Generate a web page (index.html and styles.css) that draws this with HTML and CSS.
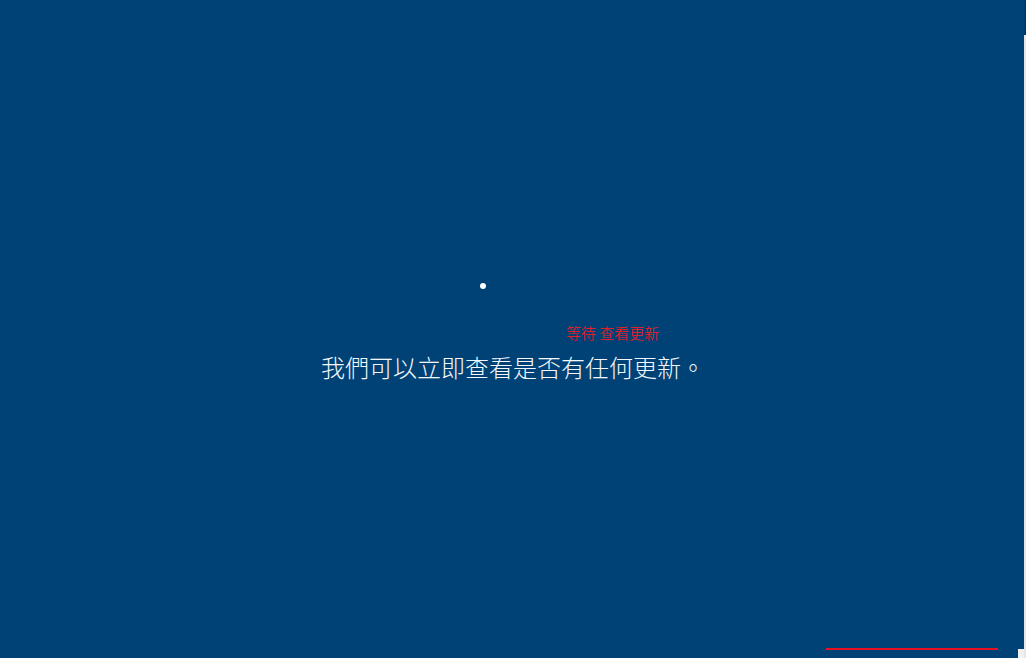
FILE: index.html
```html
<!DOCTYPE html>
<html lang="zh-Hant">
<head>
<meta charset="utf-8">
<title>更新</title>
<link rel="stylesheet" href="styles.css">
</head>
<body>
<div class="page">
  <main class="stage">
    <div class="spinner"><span class="dot"></span></div>
    <div class="message">
      <div class="status">等待 查看更新</div>
      <div class="title">我們可以立即查看是否有任何更新。</div>
    </div>
    <div class="footer"><span class="progress"></span></div>
  </main>
  <div class="edge"><span class="edge-top"></span><span class="edge-bar"></span></div>
  <span class="corner"></span>
</div>
</body>
</html>
```
FILE: styles.css
```css
html, body {
  margin: 0;
  padding: 0;
  height: 100%;
  background: #004275;
  overflow: hidden;
}
.page {
  position: relative;
  display: flex;
  width: 1026px;
  height: 658px;
  font-family: "Noto Sans CJK TC", "Noto Sans", sans-serif;
}
.stage {
  flex: 1;
  display: flex;
  flex-direction: column;
  align-items: center;
  padding-top: 283px;
  background: #004275;
}
.spinner {
  width: 6px;
  height: 6px;
  margin-left: -59px;
}
.dot {
  display: block;
  width: 6px;
  height: 6px;
  border-radius: 50%;
  background: #ffffff;
}
.message {
  width: 384px;
  margin-top: 35px;
  margin-left: 2px;
  display: flex;
  flex-direction: column;
}
.status {
  padding-left: 245px;
  font-size: 15px;
  font-weight: 300;
  line-height: 18px;
  color: #ff1a1a;
  white-space: nowrap;
}
.title {
  margin-top: 11px;
  font-size: 24px;
  font-weight: 300;
  line-height: 28px;
  color: #f4f8fc;
  white-space: nowrap;
}
.footer {
  margin-top: auto;
  align-self: stretch;
  display: flex;
  padding-left: 826px;
  padding-bottom: 8px;
}
.progress {
  display: block;
  width: 172px;
  height: 2px;
  background: #e81123;
}
.edge {
  width: 2px;
  display: flex;
  flex-direction: column;
}
.edge-top {
  height: 35px;
  background: #003a68;
}
.edge-bar {
  flex: 1;
  background: #e6e6e6;
}
.corner {
  position: absolute;
  left: 1018px;
  top: 649px;
  width: 6px;
  height: 9px;
  background: #f0f0f0;
}
```
